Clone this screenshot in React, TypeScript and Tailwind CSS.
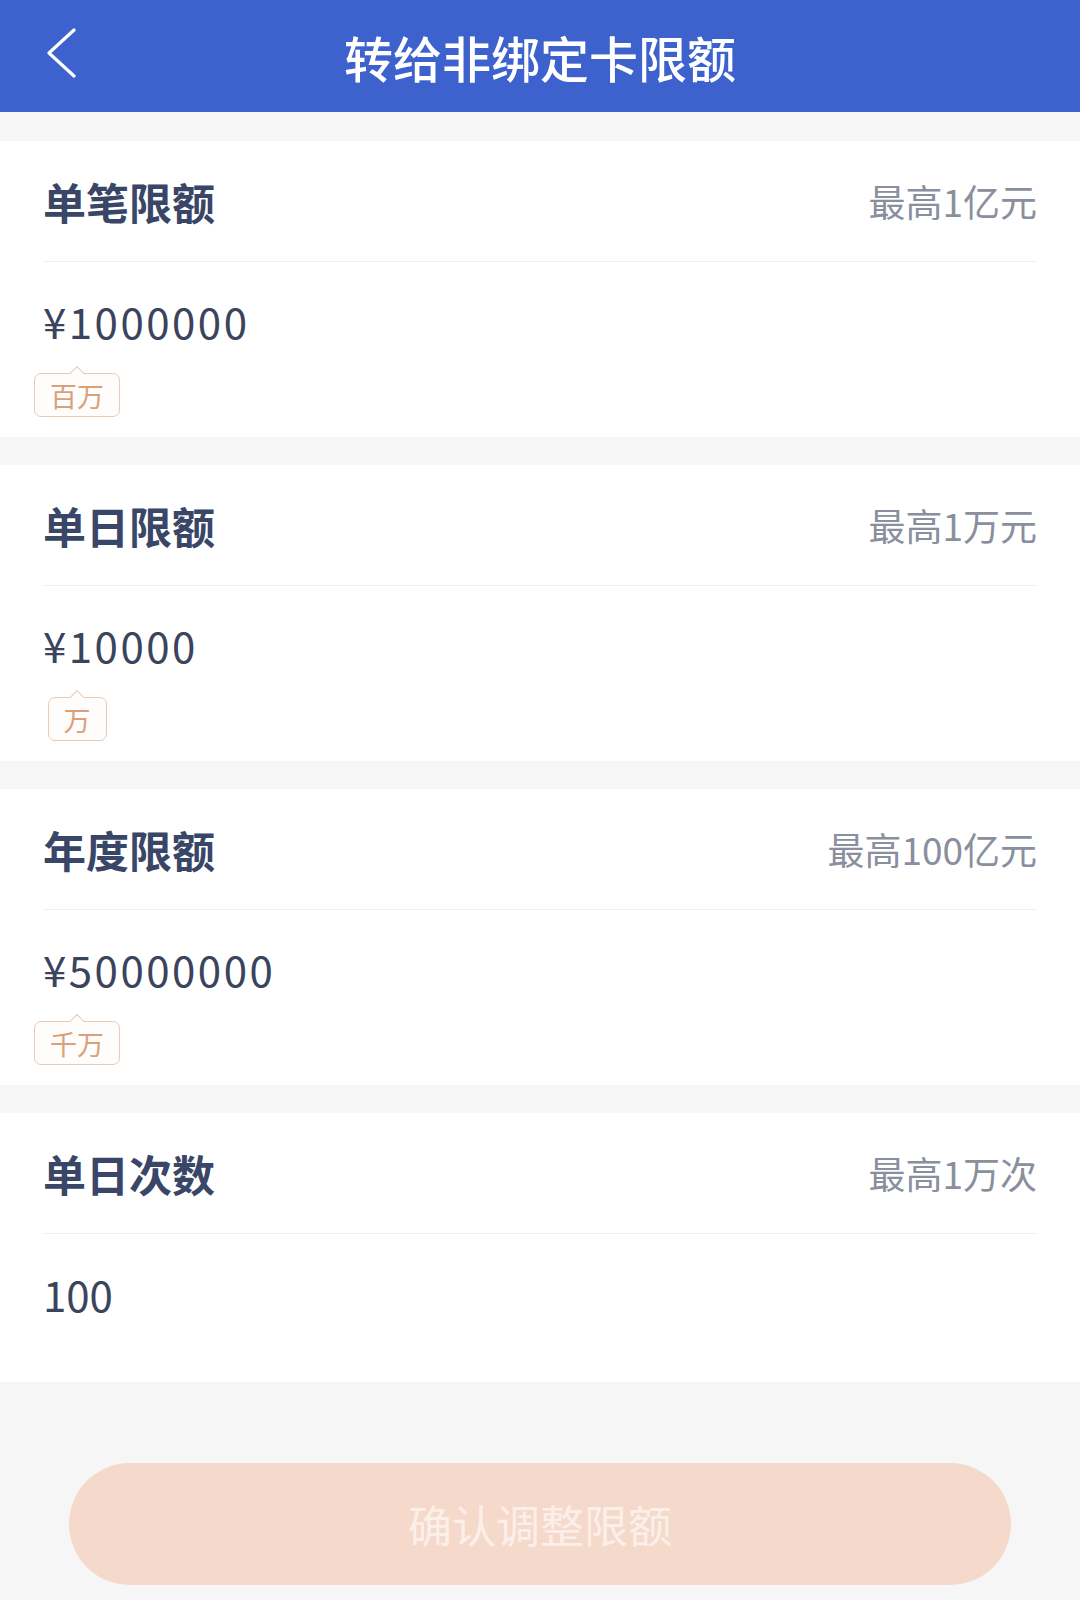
const cjk = { fontFamily: '"Noto Sans CJK SC", "Noto Sans", sans-serif' };

interface LimitRow {
  title: string;
  max: string;
  value: string;
  tag?: string;
}

const rows: LimitRow[] = [
  { title: '单笔限额', max: '最高1亿元', value: '¥1000000', tag: '百万' },
  { title: '单日限额', max: '最高1万元', value: '¥10000', tag: '万' },
  { title: '年度限额', max: '最高100亿元', value: '¥50000000', tag: '千万' },
  { title: '单日次数', max: '最高1万次', value: '100' },
];

function Tag({ label }: { label: string }) {
  return (
    <div className="flex w-[154px] justify-center">
      <div className="relative h-[44px] rounded-[7px] border border-[#e6cbb9] bg-[#fffdfb] px-[15px] flex items-center">
        {/* caret */}
        <span className="absolute left-1/2 top-[-6px] h-[10px] w-[10px] -translate-x-1/2 rotate-45 border-l border-t border-[#e6cbb9] bg-[#fffdfb]" />
        <span className="text-[27px] leading-none text-[#d9a07c]">{label}</span>
      </div>
    </div>
  );
}

function LimitCard({ row }: { row: LimitRow }) {
  const isMoney = row.value.startsWith('¥');
  return (
    <section className="bg-white px-[43px]">
      {/* Header */}
      <div className="flex h-[121px] items-center justify-between border-b border-[#f0f0f2]">
        <span className="text-[43px] font-bold leading-none text-[#394667]">{row.title}</span>
        <span className="text-[37px] leading-none text-[#8a8f9d]">{row.max}</span>
      </div>

      {/* Value */}
      <div className={row.tag ? 'pt-[37px] pb-[20px]' : 'pt-[38px] pb-[66px]'}>
        <div
          className={`h-[44px] flex items-center text-[42px] leading-none text-[#3a445c] ${
            isMoney ? 'tracking-[2.5px]' : ''
          }`}
        >
          {row.value}
        </div>
        {row.tag && (
          <div className="mt-[30px] -ml-[43px]">
            <Tag label={row.tag} />
          </div>
        )}
      </div>
    </section>
  );
}

export default function App() {
  return (
    <div className="min-h-[1600px] w-[1080px] bg-[#f6f6f6]" style={cjk}>
      {/* Nav bar */}
      <header className="relative flex h-[112px] items-center justify-center bg-[#3e62cd]">
        <button className="absolute left-[45px] top-[28px]">
          <svg width="32" height="50" viewBox="0 0 32 50" fill="none">
            <polyline points="29,2 4,25 29,48" stroke="white" strokeWidth="3.2" strokeLinecap="round" strokeLinejoin="round" />
          </svg>
        </button>
        <h1 className="text-[49px] font-medium leading-none text-white">转给非绑定卡限额</h1>
      </header>

      <div className="flex flex-col gap-[28px] pt-[29px]">
        {rows.map((row) => (
          <LimitCard key={row.title} row={row} />
        ))}
      </div>

      {/* Confirm */}
      <div className="px-[69px] pt-[81px]">
        <button className="flex h-[122px] w-full items-center justify-center rounded-full bg-[#f5d9cb] text-[44px] leading-none text-[#fcefe9]">
          确认调整限额
        </button>
      </div>
    </div>
  );
}
